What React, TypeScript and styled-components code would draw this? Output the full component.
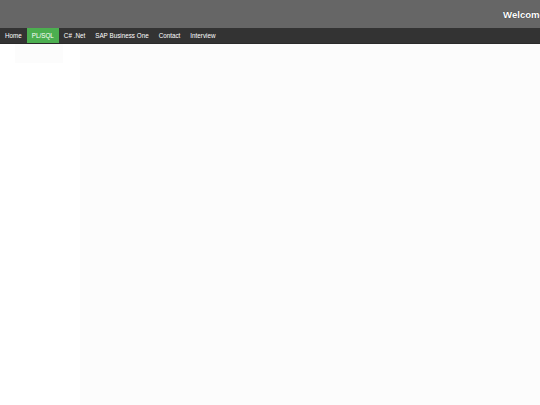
import React from 'react';
import styled, { createGlobalStyle } from 'styled-components';

const GlobalStyle = createGlobalStyle`
  html, body {
    margin: 0;
    padding: 0;
    background: #ffffff;
    font-family: 'Liberation Sans', Arial, sans-serif;
    overflow: hidden;
  }
`;

const Page = styled.div`
  width: 540px;
  height: 405px;
  display: flex;
  flex-direction: column;
  overflow: hidden;
`;

const Header = styled.header`
  height: 28px;
  background: #666666;
  display: flex;
  align-items: center;
  padding-left: 503px;
  overflow: hidden;
`;

// the greeting runs past the right edge in the original, clipped by the header
const Welcome = styled.span`
  color: #ffffff;
  font-size: 9.6px;
  font-weight: bold;
  white-space: nowrap;
  text-shadow: 0 0 1px rgba(0, 0, 0, 0.6);
`;

const Nav = styled.nav`
  height: 15px;
  background: #333333;
  border-bottom: 1px solid #2a2a2a;
  display: flex;
  position: relative;
`;

const NavItem = styled.a<{ $active?: boolean }>`
  display: flex;
  align-items: center;
  padding: 0 5px;
  color: #ffffff;
  font-size: 6.3px;
  text-decoration: none;
  white-space: nowrap;
  background: ${(p) => (p.$active ? '#4caf50' : 'transparent')};
`;

const Dropdown = styled.div`
  position: absolute;
  top: 16px;
  left: 15px;
  width: 48px;
  height: 19px;
  background: #fcfcfc;
`;

const Body = styled.div`
  flex: 1;
  display: grid;
  grid-template-columns: 80px 1fr;
`;

const Side = styled.aside`
  background: #ffffff;
`;

const Main = styled.main`
  background: #fcfcfc;
`;

const items = ['Home', 'PL/SQL', 'C# .Net', 'SAP Business One', 'Contact', 'Interview'];

export default function App() {
  return (
    <Page>
      <GlobalStyle />
      <Header>
        <Welcome>Welcome</Welcome>
      </Header>
      <Nav>
        {items.map((item) => (
          <NavItem key={item} href="#" $active={item === 'PL/SQL'}>
            {item}
          </NavItem>
        ))}
        <Dropdown />
      </Nav>
      <Body>
        <Side />
        <Main />
      </Body>
    </Page>
  );
}
